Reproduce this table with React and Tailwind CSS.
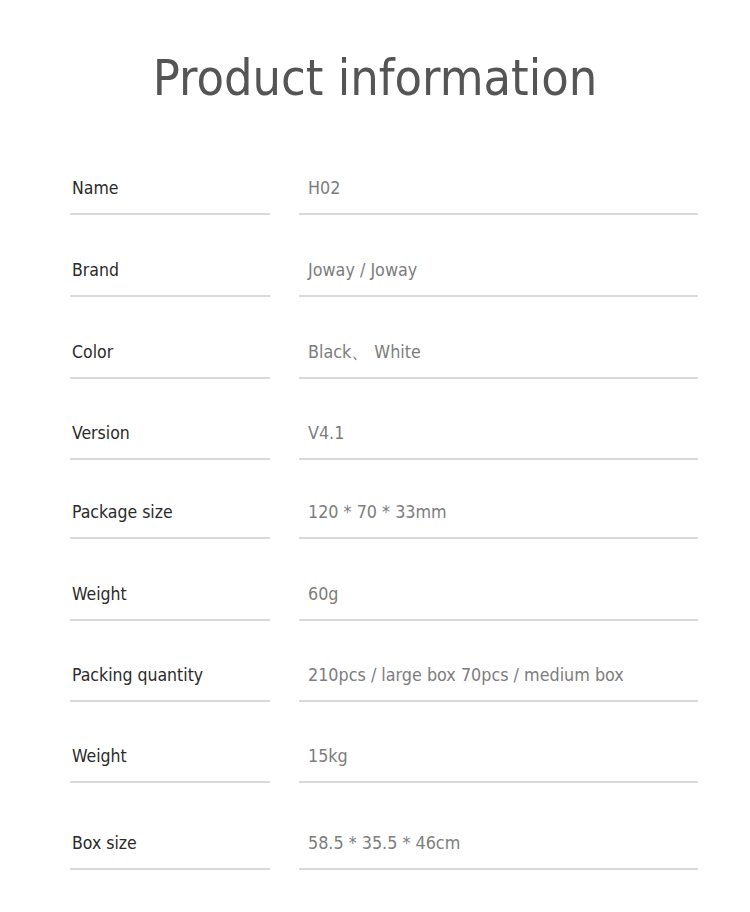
const rows = [
  { label: "Name", value: "H02", h: "h-[82px]" },
  { label: "Brand", value: "Joway / Joway", h: "h-[82px]" },
  { label: "Color", value: "Black、 White", h: "h-[82px]" },
  { label: "Version", value: "V4.1", h: "h-[81px]" },
  { label: "Package size", value: "120 * 70 * 33mm", h: "h-[79px]" },
  { label: "Weight", value: "60g", h: "h-[82px]" },
  { label: "Packing quantity", value: "210pcs / large box 70pcs / medium box", h: "h-[81px]" },
  { label: "Weight", value: "15kg", h: "h-[81px]" },
  { label: "Box size", value: "58.5 * 35.5 * 46cm", h: "h-[87px]" },
];

export default function App() {
  return (
    <div
      className="w-[750px] h-[912px] bg-white"
      style={{ fontFamily: '"DejaVu Sans Condensed", "DejaVu Sans", sans-serif' }}
    >
      <h1 className="pt-[46px] text-center text-[50px] leading-[64px] text-[#555555]">
        Product information
      </h1>
      <div className="mt-[23px] pl-[70px]">
        {rows.map((row, i) => (
          <div key={i} className={`flex items-end ${row.h}`}>
            <div className="w-[200px] pl-[2px] pb-[13px] border-b-2 border-[#d9d9d9] text-[17.5px] leading-[24px] text-[#2a2a2a]">
              {row.label}
            </div>
            <div className="ml-[29px] w-[399px] pl-[9px] pb-[13px] border-b-2 border-[#d9d9d9] text-[17.8px] leading-[24px] text-[#7d7d7d]">
              {row.value}
            </div>
          </div>
        ))}
      </div>
    </div>
  );
}
